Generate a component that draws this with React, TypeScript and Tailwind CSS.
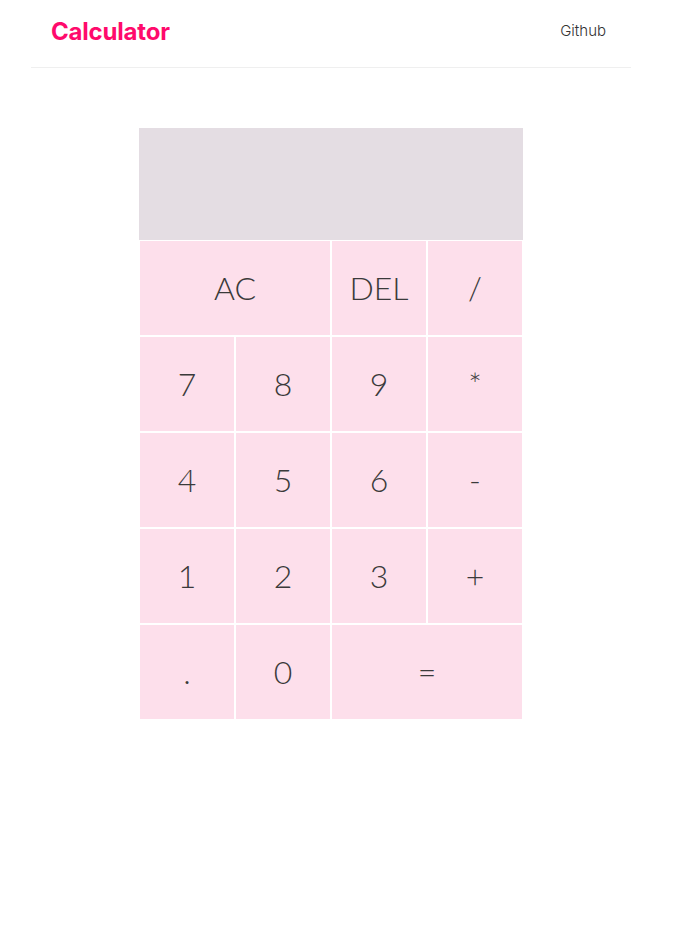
export default function App() {
  const font = { fontFamily: "Lato, 'Noto Sans', sans-serif" };
  const btn =
    "flex items-center justify-center h-[96px] bg-[#fddfeb] border border-white text-[32px] font-light text-[#3a3a3a]";

  return (
    <div className="w-[662px] min-h-[944px] bg-white" style={font}>
      <header className="mx-auto w-[600px] h-[68px] border-b border-[#efefef] flex items-center justify-between px-5 pb-[4px]">
        <span className="text-[24px] font-bold text-[#ff0a6c] font-[Inter,sans-serif] tracking-[-0.2px]">
          Calculator
        </span>
        <a className="text-[15px] font-[Inter,sans-serif] font-light text-[#333] mr-[5px]">Github</a>
      </header>

      <div className="mx-auto w-[384px] mt-[60px]">
        <div className="h-[112px] bg-[#e4dde3]" />
        <div className="grid grid-cols-4">
          <button className={`${btn} col-span-2`}>AC</button>
          <button className={btn}>DEL</button>
          <button className={btn}>/</button>
          <button className={btn}>7</button>
          <button className={btn}>8</button>
          <button className={btn}>9</button>
          <button className={btn}>*</button>
          <button className={btn}>4</button>
          <button className={btn}>5</button>
          <button className={btn}>6</button>
          <button className={btn}>-</button>
          <button className={btn}>1</button>
          <button className={btn}>2</button>
          <button className={btn}>3</button>
          <button className={btn}>+</button>
          <button className={btn}>.</button>
          <button className={btn}>0</button>
          <button className={`${btn} col-span-2`}>=</button>
        </div>
      </div>
    </div>
  );
}
